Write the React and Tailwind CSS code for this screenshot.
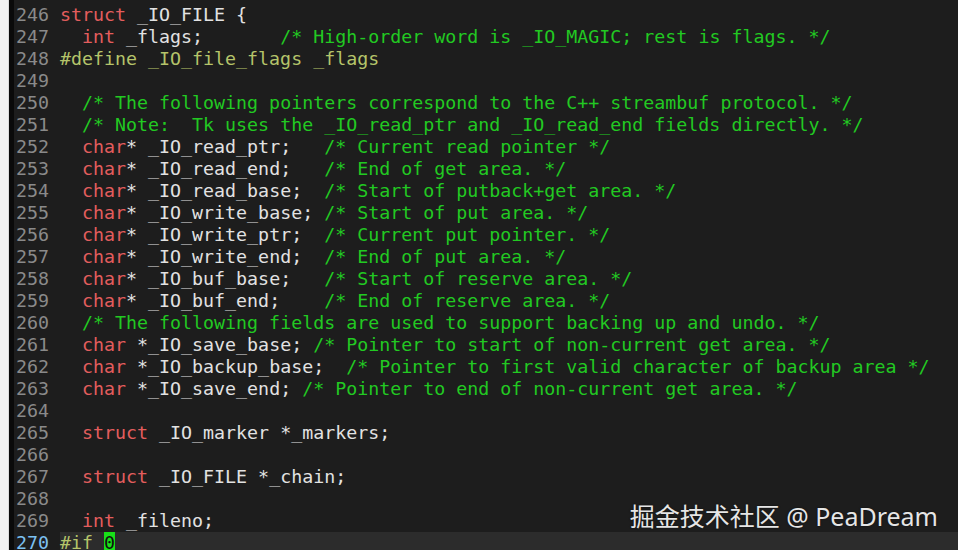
const colors = {
    k: 'text-[#e35d5d]',
    c: 'text-[#22c922]',
    p: 'text-[#b5c46a]',
    t: 'text-[#e2e2e2]',
}

const lines = [
    [246, [['k', 'struct'], ['t', ' _IO_FILE {']]],
    [247, [['t', '  '], ['k', 'int'], ['t', ' _flags;       '], ['c', '/* High-order word is _IO_MAGIC; rest is flags. */']]],
    [248, [['p', '#define _IO_file_flags _flags']]],
    [249, []],
    [250, [['t', '  '], ['c', '/* The following pointers correspond to the C++ streambuf protocol. */']]],
    [251, [['t', '  '], ['c', '/* Note:  Tk uses the _IO_read_ptr and _IO_read_end fields directly. */']]],
    [252, [['t', '  '], ['k', 'char'], ['t', '* _IO_read_ptr;   '], ['c', '/* Current read pointer */']]],
    [253, [['t', '  '], ['k', 'char'], ['t', '* _IO_read_end;   '], ['c', '/* End of get area. */']]],
    [254, [['t', '  '], ['k', 'char'], ['t', '* _IO_read_base;  '], ['c', '/* Start of putback+get area. */']]],
    [255, [['t', '  '], ['k', 'char'], ['t', '* _IO_write_base; '], ['c', '/* Start of put area. */']]],
    [256, [['t', '  '], ['k', 'char'], ['t', '* _IO_write_ptr;  '], ['c', '/* Current put pointer. */']]],
    [257, [['t', '  '], ['k', 'char'], ['t', '* _IO_write_end;  '], ['c', '/* End of put area. */']]],
    [258, [['t', '  '], ['k', 'char'], ['t', '* _IO_buf_base;   '], ['c', '/* Start of reserve area. */']]],
    [259, [['t', '  '], ['k', 'char'], ['t', '* _IO_buf_end;    '], ['c', '/* End of reserve area. */']]],
    [260, [['t', '  '], ['c', '/* The following fields are used to support backing up and undo. */']]],
    [261, [['t', '  '], ['k', 'char'], ['t', ' *_IO_save_base; '], ['c', '/* Pointer to start of non-current get area. */']]],
    [262, [['t', '  '], ['k', 'char'], ['t', ' *_IO_backup_base;  '], ['c', '/* Pointer to first valid character of backup area */']]],
    [263, [['t', '  '], ['k', 'char'], ['t', ' *_IO_save_end; '], ['c', '/* Pointer to end of non-current get area. */']]],
    [264, []],
    [265, [['t', '  '], ['k', 'struct'], ['t', ' _IO_marker *_markers;']]],
    [266, []],
    [267, [['t', '  '], ['k', 'struct'], ['t', ' _IO_FILE *_chain;']]],
    [268, []],
    [269, [['t', '  '], ['k', 'int'], ['t', ' _fileno;']]],
]

export default function App() {
    return (
        <div className="w-[958px] h-[550px] overflow-hidden flex bg-[#1d1d1d] relative">
            <div className="w-[9px] shrink-0 bg-[#f2f2f2] border-r border-[#dcdcdc]" />
            <div className="w-[5px] shrink-0 bg-[#0a0a0a]" />
            <div
                className="flex-1 pt-[4px] pl-[2px] text-[18.3px] leading-[22px] whitespace-pre"
                style={{ fontFamily: '"DejaVu Sans Mono", "Liberation Mono", monospace' }}
            >
                {lines.map(([n, toks]) => (
                    <div key={n} className="flex h-[22px]">
                        <span className="w-[44px] shrink-0 text-[#8a8a8a]">{n}</span>
                        <span>
                            {toks.map(([k, s], i) => (
                                <span key={i} className={colors[k]}>{s}</span>
                            ))}
                        </span>
                    </div>
                ))}
                <div className="flex h-[22px]">
                    <span className="w-[44px] shrink-0 text-[#7cc0f0]">270</span>
                    <span className="flex-1 bg-[#2c2c2c]">
                        <span className="text-[#b5c46a]">#if </span>
                        <span className="bg-[#18e018] text-[#101010]">0</span>
                    </span>
                </div>
            </div>
            <div
                className="absolute right-[20px] top-[501px] text-[25px] leading-[31px] text-[#e6e6e6] [text-shadow:0_0_2px_rgba(0,0,0,0.6)]"
                style={{ fontFamily: '"Noto Sans", "Noto Sans CJK SC", sans-serif' }}
            >
                掘金技术社区 @ PeaDream
            </div>
        </div>
    )
}
